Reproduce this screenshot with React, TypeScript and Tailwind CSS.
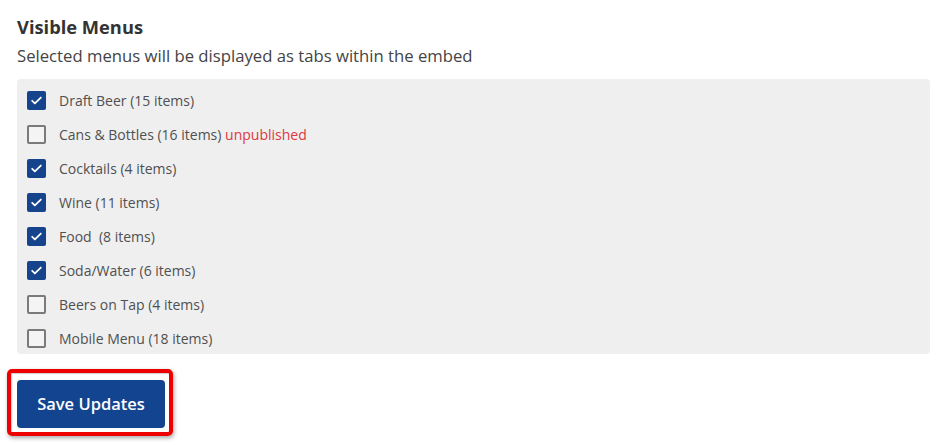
const menus = [
  { name: "Draft Beer", count: "(15 items)", checked: true },
  { name: "Cans & Bottles", count: "(16 items)", checked: false, unpublished: true },
  { name: "Cocktails", count: "(4 items)", checked: true },
  { name: "Wine", count: "(11 items)", checked: true },
  { name: "Food", count: " (8 items)", checked: true },
  { name: "Soda/Water", count: "(6 items)", checked: true },
  { name: "Beers on Tap", count: "(4 items)", checked: false },
  { name: "Mobile Menu", count: "(18 items)", checked: false },
];

function Box({ checked }: { checked: boolean }) {
  if (checked) {
    return (
      <span className="flex h-[19px] w-[19px] shrink-0 items-center justify-center rounded-[2px] bg-[#16448c]">
        <svg className="h-[13px] w-[13px] text-white" viewBox="0 0 24 24" fill="none" stroke="currentColor" strokeWidth={3.2}>
          <path strokeLinecap="round" strokeLinejoin="round" d="M4 12.5l5 5L20 6.5" />
        </svg>
      </span>
    );
  }
  return <span className="h-[19px] w-[19px] shrink-0 rounded-[2px] border-2 border-[#7a7a7a] bg-[#f4f4f4]" />;
}

export default function App() {
  return (
    <div className="min-h-[445px] bg-white pl-[17px] pr-[14px] pt-[15px] font-['Open_Sans','Liberation_Sans',sans-serif]">
      <h2 className="text-[18.3px] font-bold leading-[24px] text-[#333]">Visible Menus</h2>
      <p className="mt-[5px] text-[16.7px] leading-[24px] text-[#444]">
        Selected menus will be displayed as tabs within the embed
      </p>
      <div className="mt-[11px] flex flex-col gap-[15px] rounded-[4px] bg-[#efefef] pb-[6px] pl-[10px] pt-[12px]">
        {menus.map((m) => (
          <label key={m.name} className="flex h-[19px] items-center gap-[13px] text-[14px] text-[#505050]">
            <Box checked={m.checked} />
            <span className="whitespace-pre">
              {m.name} {m.count}
              {m.unpublished && <span className="text-[#e0383e]"> unpublished</span>}
            </span>
          </label>
        ))}
      </div>
      <div className="-ml-[10px] mt-[15px] inline-block rounded-[5px] border-4 border-[#ee0000] pb-[4px] pl-[6px] pr-[4px] pt-[7px] shadow-[1px_2px_4px_rgba(0,0,0,0.35),inset_1px_1px_1px_rgba(0,0,0,0.2)]">
        <button className="block h-[48px] w-[148px] rounded-[4px] bg-[#134490] text-[16.5px] font-semibold text-white">
          Save Updates
        </button>
      </div>
    </div>
  );
}
